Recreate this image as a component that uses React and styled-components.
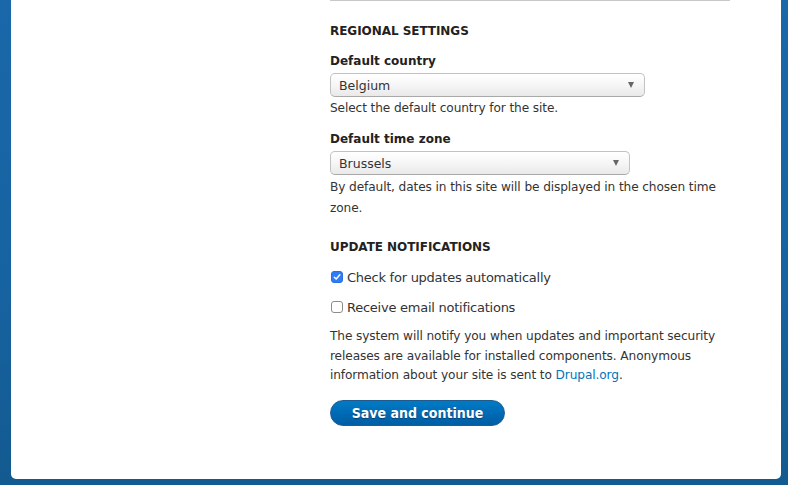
import React from 'react';
import styled, { createGlobalStyle } from 'styled-components';

const GlobalStyle = createGlobalStyle`
    html, body {
        margin: 0;
        padding: 0;
    }
    body {
        background: linear-gradient(180deg, #1a67a9 0%, #1762a0 60%, #125a8f 100%);
        font-family: "DejaVu Sans", "Lucida Grande", sans-serif;
        color: #333;
        overflow: hidden;
    }
`

const Page = styled.div`
    width: 788px;
    height: 485px;
    padding: 0 7px 6px 11px;
    box-sizing: border-box;
    display: flex;
`

const Card = styled.main`
    flex: 1;
    background: #fff;
    border-radius: 0 0 5px 5px;
    display: grid;
    grid-template-columns: 319px 400px 1fr;
`

const Sidebar = styled.aside``

const Content = styled.form`
    display: flex;
    flex-direction: column;
`

const Divider = styled.div`
    height: 1px;
    background: #c8c8c8;
`

const Legend = styled.h2`
    margin: ${props => props.$top || 20}px 0 0;
    font-size: 12px;
    font-weight: bold;
    line-height: 20px;
    text-transform: uppercase;
    color: #222;
    letter-spacing: -0.05px;
`

const Label = styled.label`
    display: block;
    margin-top: ${props => props.$top || 10}px;
    font-size: 12px;
    font-weight: bold;
    line-height: 20px;
    color: #222;
`

const Select = styled.div`
    margin-top: 2px;
    width: ${props => props.$width}px;
    height: 24px;
    box-sizing: border-box;
    border: 1px solid #c2c2c2;
    border-bottom-color: #a9a9a9;
    border-radius: 5px;
    background: linear-gradient(180deg, #ffffff 0%, #f6f6f6 50%, #e9e9e9 100%);
    display: flex;
    align-items: center;
    justify-content: space-between;
    padding: 0 10px 0 8px;
    font-size: 12.5px;
    color: #333;
`

const Arrow = styled.span`
    width: 0;
    height: 0;
    border-left: 3.5px solid transparent;
    border-right: 3.5px solid transparent;
    border-top: 6px solid #666;
`

const Description = styled.div`
    margin-top: ${props => props.$top || 1}px;
    font-size: 12.15px;
    letter-spacing: -0.1px;
    line-height: ${props => props.$lh || 20}px;
    color: #333;
`

const CheckRow = styled.label`
    display: flex;
    align-items: center;
    gap: 4px;
    margin-top: 10px;
    height: 20px;
    font-size: 13px;
    letter-spacing: -0.25px;
    color: #333;
`

const Box = styled.span`
    width: 12px;
    height: 12px;
    margin-left: 1px;
    box-sizing: border-box;
    border-radius: 3px;
    display: inline-flex;
    align-items: center;
    justify-content: center;
    background: ${props => props.$checked ? '#2f7cf6' : '#fff'};
    border: 1px solid ${props => props.$checked ? '#2a6fe0' : '#8d8d8d'};
`

const Link = styled.a`
    color: #0074bd;
    text-decoration: none;
`

const Button = styled.button`
    margin-top: 14px;
    align-self: flex-start;
    width: 175px;
    height: 26px;
    padding: 0;
    border: 1px solid #1e5c90;
    border-radius: 13px;
    background: linear-gradient(180deg, #007bc6 0%, #0069b4 55%, #005ea4 100%);
    color: #fff;
    font-family: "DejaVu Sans Condensed", "DejaVu Sans", sans-serif;
    font-stretch: condensed;
    font-size: 14px;
    font-weight: bold;
    text-shadow: 0 1px 1px rgba(0, 0, 0, 0.35);
    cursor: pointer;
`

function Checkbox({ checked }) {
    return (
        <Box $checked={checked}>
            {checked && (
                <svg width="8" height="8" viewBox="0 0 8 8">
                    <path d="M1.3 4.2 L3.2 6 L6.8 1.8" fill="none" stroke="#fff" strokeWidth="1.5" strokeLinecap="round" strokeLinejoin="round" />
                </svg>
            )}
        </Box>
    );
}

export default function App() {
    return (
        <>
            <GlobalStyle />
            <Page>
                <Card>
                    <Sidebar />
                    <Content onSubmit={ev => ev.preventDefault()}>
                        <Divider />
                        <Legend>Regional settings</Legend>

                        <Label>Default country</Label>
                        <Select $width={315}>
                            <span>Belgium</span>
                            <Arrow />
                        </Select>
                        <Description>Select the default country for the site.</Description>

                        <Label $top={11}>Default time zone</Label>
                        <Select $width={300}>
                            <span>Brussels</span>
                            <Arrow />
                        </Select>
                        <Description $top={2} $lh={21}>
                            By default, dates in this site will be displayed in the chosen time zone.
                        </Description>

                        <Legend $top={18}>Update notifications</Legend>
                        <CheckRow>
                            <Checkbox checked />
                            Check for updates automatically
                        </CheckRow>
                        <CheckRow>
                            <Checkbox />
                            Receive email notifications
                        </CheckRow>
                        <Description $top={10} $lh={19.5}>
                            The system will notify you when updates and important security releases are available for installed components. Anonymous information about your site is sent to <Link href="#">Drupal.org</Link>.
                        </Description>

                        <Button type="submit">Save and continue</Button>
                    </Content>
                    <div />
                </Card>
            </Page>
        </>
    );
}
